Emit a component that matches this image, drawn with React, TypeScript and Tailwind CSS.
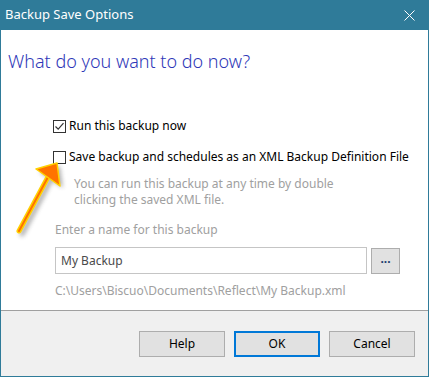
import React from 'react';

const font = { fontFamily: '"Noto Sans", "Open Sans", Arial, sans-serif' };

function Check({ checked }: { checked?: boolean }) {
  return (
    <span className="flex h-[13px] w-[13px] shrink-0 items-center justify-center border border-[#333] bg-white">
      {checked && (
        <svg width="11" height="11" viewBox="0 0 11 11">
          <path d="M1.5 5.5 L4.2 8.2 L9.5 2.2" fill="none" stroke="#333" strokeWidth="1.2" />
        </svg>
      )}
    </span>
  );
}

function Arrow() {
  return (
    <svg className="pointer-events-none absolute left-0 top-[150px]" width="80" height="95" viewBox="0 150 80 95">
      <defs>
        <filter id="sh" x="-50%" y="-50%" width="200%" height="200%">
          <feGaussianBlur stdDeviation="2" />
        </filter>
      </defs>
      {/* shadow */}
      <g transform="translate(3 3)" opacity="0.45" filter="url(#sh)">
        <path d="M18 231 L46 178" stroke="#555" strokeWidth="5" strokeLinecap="round" />
        <path d="M56 163 L35 169 L59 185 Z" fill="#555" />
      </g>
      {/* shaft */}
      <path d="M18 231 L47 177" stroke="#ffd200" strokeWidth="5" strokeLinecap="round" />
      <path d="M18 231 L47 177" stroke="#ff7300" strokeWidth="2" strokeLinecap="round" />
      {/* head */}
      <path d="M56 163 L35 169 L59 186 Z" fill="#ff7300" stroke="#ffd200" strokeWidth="1.5" strokeLinejoin="round" />
    </svg>
  );
}

export default function App() {
  return (
    <div className="relative flex h-[377px] w-[429px] flex-col border border-t-0 border-[#2f7b99] bg-white text-[12px] text-black" style={font}>
      {/* title bar */}
      <div className="-mx-px flex h-[30px] shrink-0 items-center justify-between bg-[#2f7b99] pl-[5px] pr-[14px] text-white">
        <span className="text-[13px]">Backup Save Options</span>
        <svg width="11" height="11" viewBox="0 0 11 11">
          <path d="M0.5 0.5 L10.5 10.5 M10.5 0.5 L0.5 10.5" stroke="white" strokeWidth="1" />
        </svg>
      </div>

      {/* body */}
      <div className="flex flex-1 flex-col bg-white">
        <h1 className="mt-[19px] pl-[7px] text-[18px] font-light leading-[24px] text-[#2f38b8]">What do you want to do now?</h1>

        <div className="mt-[45px] flex flex-col pl-[52px]">
          <label className="flex h-[16px] items-center gap-[3px]">
            <Check checked />
            <span>Run this backup now</span>
          </label>
          <label className="mt-[15px] flex h-[16px] items-center gap-[3px]">
            <Check />
            <span className="whitespace-nowrap">Save backup and schedules as an XML Backup Definition File</span>
          </label>
          <p className="mt-[11px] pl-[21px] leading-[16px] text-[#a0a0a0]">
            You can run this backup at any time by double
            <br />
            clicking the saved XML file.
          </p>
          <p className="mt-[14px] pl-[2px] leading-[16px] text-[#a0a0a0]">Enter a name for this backup</p>
          <div className="mt-[9px] flex items-center gap-[4px] pl-[2px]">
            <div className="flex h-[27px] w-[312px] items-center border border-[#c5c5c5] px-[5px] text-[#4a4a4a]">My Backup</div>
            <button className="flex h-[26px] w-[29px] items-center justify-center border border-[#adadad] bg-[#e1e1e1] pb-[4px] font-bold text-[#1a3b6e]">...</button>
          </div>
          <p className="mt-[9px] pl-[2px] leading-[16px] text-[#a0a0a0]">C:\Users\Biscuo\Documents\Reflect\My Backup.xml</p>
        </div>
      </div>

      {/* footer */}
      <div className="flex h-[66px] shrink-0 items-start justify-end gap-[9px] border-t border-[#a0a0a0] bg-[#f0f0f0] pr-[13px] pt-[20px]">
        <button className="h-[26px] w-[86px] border border-[#adadad] bg-[#e1e1e1]">Help</button>
        <button className="h-[26px] w-[86px] border-2 border-[#0078d7] bg-[#e1e1e1]">OK</button>
        <button className="h-[26px] w-[86px] border border-[#adadad] bg-[#e1e1e1]">Cancel</button>
      </div>

      <Arrow />
    </div>
  );
}
